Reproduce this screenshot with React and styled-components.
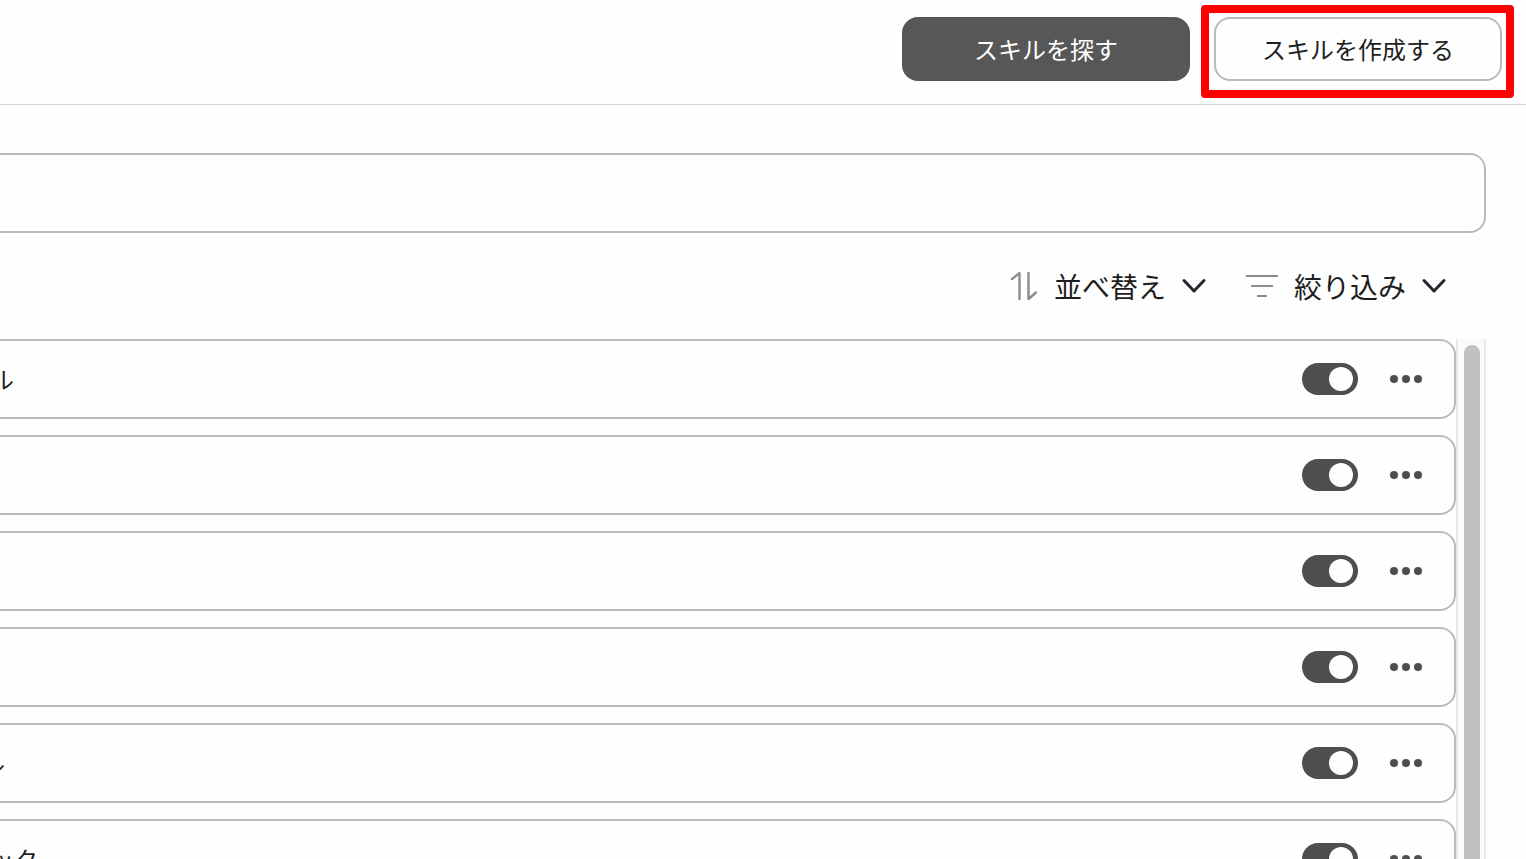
import { useState } from "react"
import { styled, createGlobalStyle } from "styled-components"

const initialSkills = [
  { id: 1, name: "ル", edge: 14, enabled: true },
  { id: 2, name: "", edge: 0, enabled: true },
  { id: 3, name: "", edge: 0, enabled: true },
  { id: 4, name: "", edge: 0, enabled: true },
  { id: 5, name: "ル", edge: 5, enabled: true },
  { id: 6, name: "ック", edge: 38, enabled: true },
]

const SortIcon = () => (
  <svg width="32" height="32" viewBox="0 0 32 32" fill="none" stroke="#8c8c8c" strokeWidth="2.4" strokeLinecap="round" strokeLinejoin="round" aria-hidden="true">
    <path d="M6 9 L13.5 3 V29" />
    <path d="M22.5 3 V29 L30 22.5" />
  </svg>
)

const FilterIcon = () => (
  <svg width="32" height="32" viewBox="0 0 32 32" fill="none" stroke="#8c8c8c" strokeWidth="2" aria-hidden="true">
    <path d="M0 6 H32 M5 16 H27 M11 26 H21" />
  </svg>
)

const Chevron = () => (
  <svg width="24" height="24" viewBox="0 0 24 24" fill="none" stroke="#25252f" strokeWidth="3" strokeLinecap="round" strokeLinejoin="round" aria-hidden="true">
    <path d="M2 6.5 L12 17 L22 6.5" />
  </svg>
)

const DotsIcon = () => (
  <svg width="32" height="8" viewBox="0 0 32 8" fill="#4e4e4e" aria-hidden="true">
    <circle cx="4" cy="4" r="4" />
    <circle cx="16" cy="4" r="4" />
    <circle cx="28" cy="4" r="4" />
  </svg>
)

const App = () => {
  const [skills, setSkills] = useState(initialSkills)
  const [query, setQuery] = useState("")

  const toggleSkill = (id) => {
    setSkills(skills.map((s) => (s.id === id ? { ...s, enabled: !s.enabled } : s)))
  }

  return (
    <Page>
      <GlobalStyle />
      <Header>
        <Button type="button" $dark>スキルを探す</Button>
        <Highlight>
          <Button type="button">スキルを作成する</Button>
        </Highlight>
      </Header>
      <Main>
        <Search
          type="text"
          aria-label="スキルを検索"
          value={query}
          onChange={(e) => setQuery(e.target.value)}
        />
        <Toolbar>
          <ToolButton type="button">
            <SortIcon />
            並べ替え
            <Chevron />
          </ToolButton>
          <ToolButton type="button">
            <FilterIcon />
            絞り込み
            <Chevron />
          </ToolButton>
        </Toolbar>
        <ListArea>
          <List>
            {skills.map((skill) => (
              <Row key={skill.id}>
                <Name $edge={skill.edge}>{skill.name}</Name>
                <Actions>
                  <Switch
                    type="checkbox"
                    role="switch"
                    aria-label="スキルを有効にする"
                    checked={skill.enabled}
                    onChange={() => toggleSkill(skill.id)}
                  />
                  <MenuButton type="button" aria-label="メニュー">
                    <DotsIcon />
                  </MenuButton>
                </Actions>
              </Row>
            ))}
          </List>
          <Track>
            <Thumb />
          </Track>
        </ListArea>
      </Main>
    </Page>
  )
}

const GlobalStyle = createGlobalStyle`
* {
    box-sizing: border-box;
}
body {
    margin: 0;
    background: #fefefe;
    color: #1e1e1e;
    font-family: "Noto Sans CJK JP", sans-serif;
}
button, input {
    font-family: inherit;
    color: inherit;
}
`

const Page = styled.div`
display: flex;
flex-direction: column;
height: 100vh;
overflow: hidden;
`

const Header = styled.header`
display: flex;
flex-shrink: 0;
justify-content: flex-end;
gap: 24px;
padding: 17px 24px 23px;
border-bottom: 1px solid #d2d2d2;
`

const Button = styled.button`
width: 288px;
height: 64px;
padding: 0;
border: ${(p) => (p.$dark ? "none" : "2px solid #bababa")};
border-radius: 16px;
background: ${(p) => (p.$dark ? "#575757" : "#fefefe")};
color: ${(p) => (p.$dark ? "#fff" : "#1e1e1e")};
font-size: 24px;
line-height: 36px;
cursor: pointer;
`

const Highlight = styled.div`
position: relative;

&::after {
    content: "";
    position: absolute;
    top: -12px;
    right: -12px;
    bottom: -17px;
    left: -13px;
    border: 8px solid #f00;
    border-radius: 4px;
    pointer-events: none;
}
`

const Main = styled.main`
display: flex;
flex: 1;
flex-direction: column;
min-height: 0;
padding: 48px 40px 0 0;
`

const Search = styled.input`
flex-shrink: 0;
width: 100%;
height: 80px;
padding: 0 32px;
border: 2px solid #bababa;
border-left: none;
border-radius: 0 16px 16px 0;
background: #fefefe;
font-size: 28px;
outline: none;
`

const Toolbar = styled.div`
display: flex;
flex-shrink: 0;
justify-content: flex-end;
align-items: center;
gap: 40px;
height: 106px;
padding-right: 40px;
`

const ToolButton = styled.button`
display: flex;
align-items: center;
gap: 16px;
padding: 0;
border: none;
background: none;
font-size: 28px;
line-height: 40px;
cursor: pointer;
`

const ListArea = styled.div`
display: flex;
flex: 1;
min-height: 0;
`

const List = styled.ul`
display: flex;
flex: 1;
flex-direction: column;
gap: 16px;
margin: 0;
padding: 0;
overflow: hidden;
list-style: none;
`

const Row = styled.li`
display: flex;
flex-shrink: 0;
align-items: center;
justify-content: space-between;
height: 80px;
padding-right: 32px;
border: 2px solid #bababa;
border-left: none;
border-radius: 0 16px 16px 0;
`

// the name runs off the left side, only its end shows
const Name = styled.span`
display: flex;
justify-content: flex-end;
width: ${(p) => p.$edge}px;
overflow: hidden;
font-size: 24px;
line-height: 36px;
white-space: nowrap;
`

const Actions = styled.div`
display: flex;
align-items: center;
gap: 32px;
`

const Switch = styled.input`
display: flex;
align-items: center;
appearance: none;
width: 56px;
height: 32px;
margin: 0;
padding: 0 5px;
border-radius: 16px;
background: #4e4e4e;
cursor: pointer;

&::before {
    content: "";
    width: 24px;
    height: 24px;
    border-radius: 50%;
    background: #fefefe;
}
&:checked {
    justify-content: flex-end;
}
&:not(:checked) {
    background: #bababa;
}
`

const MenuButton = styled.button`
display: flex;
align-items: center;
height: 32px;
padding: 0;
border: none;
background: none;
cursor: pointer;
`

const Track = styled.div`
display: flex;
width: 30px;
padding: 6px 4px 0 6px;
border: solid #e8e8e8;
border-width: 0 2px;
background: #fafafa;
`

const Thumb = styled.div`
width: 16px;
border-radius: 8px 8px 0 0;
background: #c1c1c1;
`

export default App
